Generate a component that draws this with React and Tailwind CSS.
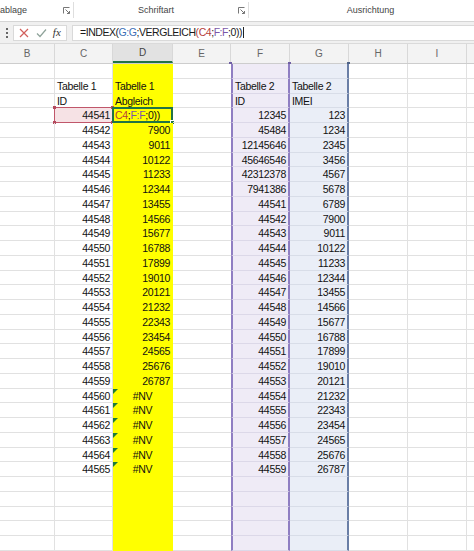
const font = "font-['Liberation_Sans',Arial,sans-serif]";
const gridCols = 'grid grid-cols-[55px_58px_60px_58px_59px_59px_59px_59px_1fr]';

const base = 'relative h-[14.75px] border-b border-r px-[2px] leading-[15px] whitespace-nowrap';
const colCls = {
  B: base + ' border-[#e1e1e1]',
  C: base + ' border-[#e1e1e1]',
  D: base + ' bg-[#ffff00] border-[#ffff00]',
  E: base + ' border-b-[#e1e1e1] border-r-0',
  F: base + ' bg-[#efebf6] border-b-[#dcd8e8] border-l-2 border-l-[#8f7ec2] border-r-2 border-r-[#8f7ec2]',
  G: base + ' bg-[#eaeef7] border-b-[#d8dde8] border-r-2 border-r-[#6a7ea6]',
  H: base + ' border-[#e1e1e1]',
  I: base + ' border-[#e1e1e1]',
  J: base + ' border-[#e1e1e1] border-r-0',
};
const letters = ['B', 'C', 'D', 'E', 'F', 'G', 'H', 'I', 'J'];

const dVals = [null, 7900, 9011, 10122, 11233, 12344, 13455, 14566, 15677, 16788, 17899, 19010, 20121, 21232, 22343, 23454, 24565, 25676, 26787, '#NV', '#NV', '#NV', '#NV', '#NV', '#NV'];
const fVals = [12345, 45484, 12145646, 45646546, 42312378, 7941386, 44541, 44542, 44543, 44544, 44545, 44546, 44547, 44548, 44549, 44550, 44551, 44552, 44553, 44554, 44555, 44556, 44557, 44558, 44559];
const gVals = [123, 1234, 2345, 3456, 4567, 5678, 6789, 7900, 9011, 10122, 11233, 12344, 13455, 14566, 15677, 16788, 17899, 19010, 20121, 21232, 22343, 23454, 24565, 25676, 26787];

const Red = ({ children }) => <span className="text-[#b5403a]">{children}</span>;
const Blue = ({ children }) => <span className="text-[#3c6fb6]">{children}</span>;
const Purple = ({ children }) => <span className="text-[#7b57a8]">{children}</span>;

function buildRows() {
  const rows = [];
  rows.push({});
  rows.push({ C: { v: 'Tabelle 1' }, D: { v: 'Tabelle 1' }, F: { v: 'Tabelle 2' }, G: { v: 'Tabelle 2' } });
  rows.push({ C: { v: 'ID' }, D: { v: 'Abgleich' }, F: { v: 'ID' }, G: { v: 'IMEI' } });
  for (let i = 0; i < 25; i++) {
    const r = {
      C: { v: 44541 + i, align: 'text-right', pink: i === 0 },
      F: { v: fVals[i], align: 'text-right' },
      G: { v: gVals[i], align: 'text-right' },
    };
    if (i === 0) r.D = { edit: true };
    else if (dVals[i] === '#NV') r.D = { v: '#NV', align: 'text-center', err: true };
    else r.D = { v: dVals[i], align: 'text-right' };
    rows.push(r);
  }
  for (let i = 0; i < 5; i++) rows.push({});
  return rows;
}

function Cell({ col, data }) {
  const align = data && data.align ? data.align : 'text-left';
  let extra = '';
  if (data && data.pink) extra = ' bg-[#f6e2e5]';
  return (
    <div className={colCls[col] + ' ' + align + extra}>
      {data && data.pink && (
        <>
          <span className="absolute inset-[-1px] border border-[#c0566a]" />
          <span className="absolute left-[-2px] top-[-2px] w-[3px] h-[3px] bg-[#b4495d]" />
          <span className="absolute right-[-2px] top-[-2px] w-[3px] h-[3px] bg-[#b4495d]" />
          <span className="absolute left-[-2px] bottom-[-2px] w-[3px] h-[3px] bg-[#b4495d]" />
          <span className="absolute right-[-2px] bottom-[-2px] w-[3px] h-[3px] bg-[#b4495d]" />
        </>
      )}
      {data && data.edit && (
        <>
          <span className="absolute inset-[-1px] border-2 border-[#217346]" />
          <span className="absolute right-[-3px] bottom-[-3px] w-[5px] h-[5px] bg-[#217346] border border-white" />
        </>
      )}
      {data && data.err && (
        <span className="absolute left-0 top-0 w-0 h-0 border-t-[5px] border-t-[#1e7b34] border-r-[5px] border-r-transparent" />
      )}
      {data && data.edit ? (
        <span className="relative">
          <Red>C4</Red>;<Purple>F:F</Purple>;0))
        </span>
      ) : (
        <span className="relative">{data ? data.v : ''}</span>
      )}
    </div>
  );
}

export default function App() {
  const rows = buildRows();
  return (
    <div className={`w-[474px] h-[551px] overflow-hidden bg-white text-[#111] ${font}`}>
      {/* ribbon group labels */}
      <div className="flex h-[22px] border-b border-[#d5d5d5] text-[9px] text-[#444] leading-[22px] bg-white">
        <div className="w-[74px] flex items-center justify-between border-r border-[#dedede] pr-[3px] h-[16px] mt-[2px]">
          <span>ablage</span>
          <LaunchIcon />
        </div>
        <div className="w-[175px] flex items-center justify-between border-r border-[#dedede] pr-[3px] h-[16px] mt-[2px]">
          <span className="flex-1 text-center">Schriftart</span>
          <LaunchIcon />
        </div>
        <div className="flex-1 flex items-center h-[16px] mt-[2px]">
          <span className="flex-1 text-center pl-[18px]">Ausrichtung</span>
        </div>
      </div>

      {/* formula bar */}
      <div className="flex items-center h-[22px] bg-[#f0f0f0] border-b border-[#dadada]">
        <div className="w-[13px] flex flex-col items-center gap-[2px]">
          <span className="w-[2px] h-[2px] bg-[#666]" />
          <span className="w-[2px] h-[2px] bg-[#666]" />
          <span className="w-[2px] h-[2px] bg-[#666]" />
        </div>
        <div className="w-[54px] h-[16px] bg-white border border-[#d9d9d9] flex items-center justify-around px-[2px]">
          <svg width="10" height="10" viewBox="0 0 10 10">
            <path d="M1 1 L9 9 M9 1 L1 9" stroke="#d2605c" strokeWidth="1.2" fill="none" />
          </svg>
          <svg width="11" height="10" viewBox="0 0 11 10">
            <path d="M1 5.5 L4 8.5 L10 1.5" stroke="#8fa39a" strokeWidth="1.2" fill="none" />
          </svg>
          <span className="font-['Liberation_Serif',serif] italic text-[11px] text-[#333] leading-none">fx</span>
        </div>
        <div className="ml-[5px] flex-1 h-[16px] bg-white border border-[#d9d9d9] border-r-0 flex items-center pl-[7px] text-[10.5px] tracking-[-0.45px] text-[#1a1a1a]">
          <span>
            =INDEX(<Blue>G:G</Blue>;VERGLEICH<Red>(C4</Red>;<Purple>F:F</Purple>;0))
          </span>
          <span className="ml-[1px] w-px h-[11px] bg-[#222]" />
        </div>
      </div>

      {/* column headers */}
      <div className={`${gridCols} h-[20px] bg-[#f3f3f3] border-b border-[#cdcdcd] text-[10px] text-[#666]`}>
        {letters.map((l) => (
          <div
            key={l}
            className={
              l === 'D'
                ? 'flex items-center justify-center border-r border-[#d8d8d8] bg-[#e2e2e2] text-[#444] border-b-2 border-b-[#217346]'
                : l === 'J'
                ? 'flex items-center justify-center'
                : 'relative flex items-center justify-center border-r border-[#d8d8d8]'
            }
          >
            {l === 'J' ? '' : l}
            {l === 'E' && <span className="absolute right-[-2px] bottom-[-1px] w-[3px] h-[2px] bg-[#6f5fa3]" />}
            {l === 'F' && <span className="absolute right-[-2px] bottom-[-1px] w-[3px] h-[2px] bg-[#6f5fa3]" />}
            {l === 'G' && <span className="absolute right-[-2px] bottom-[-1px] w-[3px] h-[2px] bg-[#4f6388]" />}
          </div>
        ))}
      </div>

      {/* cells */}
      <div className="text-[10.5px] tracking-[-0.3px]">
        {rows.map((r, i) => (
          <div key={i} className={gridCols}>
            {letters.map((l) => (
              <Cell key={l} col={l} data={r[l]} />
            ))}
          </div>
        ))}
      </div>
    </div>
  );
}

function LaunchIcon() {
  return (
    <svg width="7" height="7" viewBox="0 0 7 7">
      <path d="M0.5 6.5 V0.5 H6.5" stroke="#777" strokeWidth="1" fill="none" />
      <path d="M2.5 2.5 L6.5 6.5 M4 6.5 H6.5 V4" stroke="#777" strokeWidth="1" fill="none" />
    </svg>
  );
}
